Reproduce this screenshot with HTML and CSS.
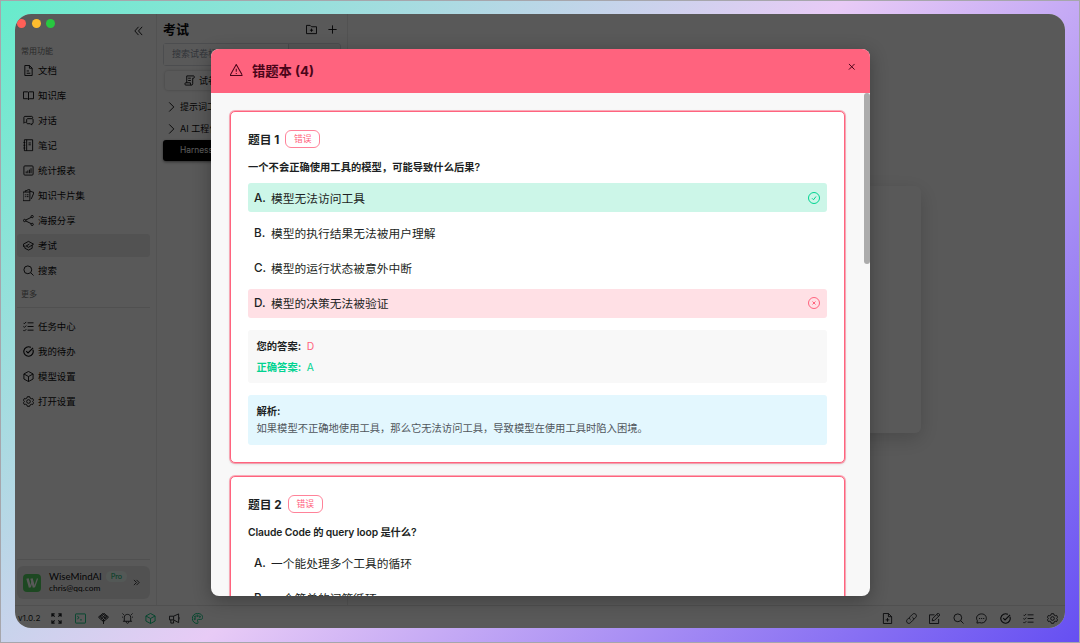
FILE: index.html
```html
<!DOCTYPE html>
<html lang="zh-CN">
<head>
  <meta charset="UTF-8" />
  <meta name="viewport" content="width=device-width, initial-scale=1.0"/>
  <title>WiseMindAI - 错题本</title>
  <link rel="stylesheet" href="styles.css">
</head>
<body>
  <svg class="sprite" xmlns="http://www.w3.org/2000/svg">
    <symbol id="i-doc" viewBox="0 0 24 24"><path d="M14 1H4v22h16V7zM14 1v6h6M8 13h5M8 18h8"/></symbol>
    <symbol id="i-book" viewBox="0 0 24 24"><path d="M12 5v16M12 5c-1-1-2-1-3-1H1v15h8c1 0 2 0 3 2 1-2 2-2 3-2h8V4h-8c-1 0-2 0-3 1z"/></symbol>
    <symbol id="i-chat" viewBox="0 0 24 24"><path d="M6 16H4l-2 2V5c0-1 1-2 2-2h15c1 0 2 1 2 2v2M10 8h10c1 0 2 1 2 2v7c0 1-1 2-2 2h-1v3l-3-3h-6c-1 0-2-1-2-2v-7c0-1 1-2 2-2z"/></symbol>
    <symbol id="i-note" viewBox="0 0 24 24"><path d="M3 0h18v24H3zM8 0v24M12 7h5M12 11h5M1 6h4M1 12h4M1 18h4"/></symbol>
    <symbol id="i-chart" viewBox="0 0 24 24"><rect x="2" y="2" width="20" height="20" rx="2"/><path d="M7 18v-4M10.500 18v-6M14 18v-8M17.500 18V7"/></symbol>
    <symbol id="i-cards" viewBox="0 0 24 24"><path d="M0 5h15v19H0zM5 5V2h4l1-2h5v5M15 3l9 3-6 14M4 11h2M8 11h4M4 15h2M8 15h4"/></symbol>
    <symbol id="i-share" viewBox="0 0 24 24"><circle cx="3.500" cy="12" r="2.500"/><circle cx="20" cy="3.500" r="2.500"/><circle cx="20" cy="20.500" r="2.500"/><path d="M6 11l12-6M6 13l12 6"/></symbol>
    <symbol id="i-exam" viewBox="0 0 24 24"><path d="M1 9l11-6 11 6-11 7-5-3 7-4M4 12v6l8 4 8-4v-7M1 9v6"/></symbol>
    <symbol id="i-search" viewBox="0 0 24 24"><circle cx="10.500" cy="10.500" r="8.500"/><path d="M17 17l6 6"/></symbol>
    <symbol id="i-tasks" viewBox="0 0 24 24"><path d="M10 4h13M10 12h13M10 20h13M1 4l2 2 4-4M1 12l2 2 4-4M1 20l2 2 4-4"/></symbol>
    <symbol id="i-todo" viewBox="0 0 24 24"><path stroke-width="2.500" d="M21.500 8A10.300 10.300 0 1 1 17 3M7 11l4 4L22 4"/></symbol>
    <symbol id="i-cube" viewBox="0 0 24 24"><path d="M12 1l10 5.500v11L12 23 2 17.500v-11zM2 6.500L12 12l10-5.500M12 12v11"/></symbol>
    <symbol id="i-gear" viewBox="0 0 24 24"><path d="M9.500 1.500h5l1 3 2.500 1.500 3-.7 2 4L21 12l2 2.700-2 4-3-.7-2.500 1.500-1 3h-5l-1-3L6 18l-3 .7-2-4L3 12 1 9.300l2-4L6 6l2.500-1.500z"/><circle cx="12" cy="12" r="4"/></symbol>
    <symbol id="i-collapse" viewBox="0 0 24 24"><path d="M12 4l-8 9 8 9M20 4l-8 9 8 9"/></symbol>
    <symbol id="i-expand" viewBox="0 0 24 24"><path d="M3 3l9 9-9 9M12 3l9 9-9 9"/></symbol>
    <symbol id="i-folder" viewBox="0 0 24 24"><path d="M1 3h8l3 3h11v15H1zM12 10v7M8.500 13.500h7"/></symbol>
    <symbol id="i-plus" viewBox="0 0 24 24"><path d="M12 3v18M3 12h18"/></symbol>
    <symbol id="i-scroll" viewBox="0 0 24 24"><path d="M6 17V2h15c2 0 2 5 0 5h-2v12c0 2-1 3-3 3H4c-3 0-3-5 0-5h10v3c0 1 1 2 2 2M9 7h6M9 12h6"/></symbol>
    <symbol id="i-chevron" viewBox="0 0 24 24"><path d="M7 3l10 10L7 23"/></symbol>
    <symbol id="i-warn" viewBox="0 0 24 24"><path d="M12 1L0 22h24zM12 9v6M12 17.500v1.500"/></symbol>
    <symbol id="i-x" viewBox="0 0 24 24"><path d="M3 3l18 18M21 3L3 21"/></symbol>
    <symbol id="i-right" viewBox="0 0 24 24"><circle cx="12" cy="12" r="11"/><path d="M8 12.500l3 3 5-6.500"/></symbol>
    <symbol id="i-wrong" viewBox="0 0 24 24"><circle cx="12" cy="12" r="11"/><path d="M9 9l6 6M15 9l-6 6"/></symbol>
    <symbol id="i-full" viewBox="0 0 24 24"><path stroke-width="2.600" d="M2 8V2h6M16 2h6v6M22 16v6h-6M8 22H2v-6M3 3l5 5M21 3l-5 5M21 21l-5-5M3 21l5-5"/></symbol>
    <symbol id="i-term" viewBox="0 0 24 24"><rect x="1" y="2" width="22" height="20" rx="1"/><path d="M5 7l4 3-4 3M11 15h4"/></symbol>
    <symbol id="i-finger" viewBox="0 0 24 24"><path d="M12 0l11 9-11 10L1 9zM7 4l11 9M4 7l11 10M10 1l11 10M17 4L6 14M20 7L9 17M14 1L3 11M12 15v9"/></symbol>
    <symbol id="i-bell" viewBox="0 0 24 24"><path d="M5 18V9c0-8 14-8 14 0v9M2 18h20M9 18c0 6 6 6 6 0M1 1l3 3M23 1l-3 3M0 9h2M22 9h2"/></symbol>
    <symbol id="i-horn" viewBox="0 0 24 24"><path d="M1 7h9l11-5v19l-11-6H1zM4 15v7h6v-6M10 7v8M24 9v5"/></symbol>
    <symbol id="i-palette" viewBox="0 0 24 24"><path d="M12 23C-3 23-3 1 12 1c13 0 14 13 7 13h-5c-4 0-1 4-1 7 0 1-.5 2-1 2z"/><circle cx="7" cy="8" r="1.500"/><circle cx="12" cy="6" r="1.500"/><circle cx="17" cy="8" r="1.500"/><circle cx="6" cy="13" r="1.500"/></symbol>
    <symbol id="i-newdoc" viewBox="0 0 24 24"><path d="M14 1H3v22h18V8zM14 1v7h7M12 11v8M8 15h8"/></symbol>
    <symbol id="i-link" viewBox="0 0 24 24"><path d="M10 15c-3-2-3-5-1-7l5-5c5-5 12 2 7 7l-4 4M14 9c3 2 3 5 1 7l-5 5c-5 5-12-2-7-7l4-4"/></symbol>
    <symbol id="i-edit" viewBox="0 0 24 24"><path d="M12 4H1v19h20V13M7 17l1-5L20 0l4 4-12 12zM17 3l4 4"/></symbol>
    <symbol id="i-msg" viewBox="0 0 24 24"><path d="M2 22l1-5C-2 9 4 2 12 2s12 6 10 13c-2 6-9 8-14 6zM6.500 12H9M11 12h2.500M15.500 12H18"/></symbol>
  </svg>

  <div class="window">
    <div class="workspace">
      <aside class="sidebar">
        <div class="sidebar-top"><svg class="icon"><use href="#i-collapse"/></svg></div>
        <div class="group-label">常用功能</div>
        <nav class="nav">
          <a class="nav-item"><svg class="icon"><use href="#i-doc"/></svg>文档</a>
          <a class="nav-item"><svg class="icon"><use href="#i-book"/></svg>知识库</a>
          <a class="nav-item"><svg class="icon"><use href="#i-chat"/></svg>对话</a>
          <a class="nav-item"><svg class="icon tall"><use href="#i-note"/></svg>笔记</a>
          <a class="nav-item"><svg class="icon"><use href="#i-chart"/></svg>统计报表</a>
          <a class="nav-item"><svg class="icon tall"><use href="#i-cards"/></svg>知识卡片集</a>
          <a class="nav-item"><svg class="icon"><use href="#i-share"/></svg>海报分享</a>
          <a class="nav-item active"><svg class="icon"><use href="#i-exam"/></svg>考试</a>
          <a class="nav-item"><svg class="icon"><use href="#i-search"/></svg>搜索</a>
        </nav>
        <div class="group-label more">更多</div>
        <nav class="nav nav-more">
          <a class="nav-item"><svg class="icon"><use href="#i-tasks"/></svg>任务中心</a>
          <a class="nav-item"><svg class="icon"><use href="#i-todo"/></svg>我的待办</a>
          <a class="nav-item"><svg class="icon"><use href="#i-cube"/></svg>模型设置</a>
          <a class="nav-item"><svg class="icon"><use href="#i-gear"/></svg>打开设置</a>
        </nav>
        <div class="account">
          <div class="user">
            <svg class="logo" viewBox="0 0 18 18"><path d="M4.500 4.500l2.500 9M8.500 4.500l2.500 9"/><path class="thin" d="M7.500 12.500L9 8M14.500 4.500l-3 8.500"/></svg>
            <div class="user-info">
              <div class="user-name">WiseMindAI <span class="pro">Pro</span></div>
              <div class="user-mail">chris@qq.com</div>
            </div>
            <svg class="icon"><use href="#i-expand"/></svg>
          </div>
        </div>
      </aside>

      <section class="papers">
        <div class="papers-head">
          <h2>考试</h2>
          <svg class="icon"><use href="#i-folder"/></svg>
          <svg class="icon"><use href="#i-plus"/></svg>
        </div>
        <div class="search"><span>搜索试卷标题</span></div>
        <div class="papers-btn"><svg class="icon"><use href="#i-scroll"/></svg>试卷</div>
        <div class="tree-item"><svg class="icon"><use href="#i-chevron"/></svg>提示词工程</div>
        <div class="tree-item"><svg class="icon"><use href="#i-chevron"/></svg>AI 工程化</div>
        <div class="tree-leaf">Harness</div>
      </section>

      <main class="content"><div class="panel"></div></main>
    </div>

    <footer class="statusbar">
      <span class="version">v1.0.2</span>
      <svg class="icon"><use href="#i-full"/></svg>
      <svg class="icon green"><use href="#i-term"/></svg>
      <svg class="icon"><use href="#i-finger"/></svg>
      <svg class="icon"><use href="#i-bell"/></svg>
      <svg class="icon green"><use href="#i-cube"/></svg>
      <svg class="icon"><use href="#i-horn"/></svg>
      <svg class="icon green"><use href="#i-palette"/></svg>
      <span class="spacer"></span>
      <svg class="icon"><use href="#i-newdoc"/></svg>
      <svg class="icon"><use href="#i-link"/></svg>
      <svg class="icon"><use href="#i-edit"/></svg>
      <svg class="icon"><use href="#i-search"/></svg>
      <svg class="icon"><use href="#i-msg"/></svg>
      <svg class="icon"><use href="#i-todo"/></svg>
      <svg class="icon"><use href="#i-tasks"/></svg>
      <svg class="icon"><use href="#i-gear"/></svg>
    </footer>

    <div class="mask"></div>
    <div class="lights"><i class="red"></i><i class="yellow"></i><i class="lime"></i></div>

    <div class="modal">
      <header class="modal-head">
        <svg class="icon warn"><use href="#i-warn"/></svg>
        <h1>错题本 (4)</h1>
        <svg class="icon close"><use href="#i-x"/></svg>
      </header>
      <div class="modal-body">
        <article class="card">
          <div class="card-head"><h3>题目 1</h3><span class="tag">错误</span></div>
          <p class="question">一个不会正确使用工具的模型，可能导致什么后果?</p>
          <ul class="options">
            <li class="right"><b>A.</b>模型无法访问工具<svg class="icon"><use href="#i-right"/></svg></li>
            <li><b>B.</b>模型的执行结果无法被用户理解</li>
            <li><b>C.</b>模型的运行状态被意外中断</li>
            <li class="wrong"><b>D.</b>模型的决策无法被验证<svg class="icon"><use href="#i-wrong"/></svg></li>
          </ul>
          <div class="answers">
            <div><strong>您的答案:</strong><span class="mine">D</span></div>
            <div class="correct"><strong>正确答案:</strong><span>A</span></div>
          </div>
          <div class="explain">
            <strong>解析:</strong>
            <p>如果模型不正确地使用工具，那么它无法访问工具，导致模型在使用工具时陷入困境。</p>
          </div>
        </article>
        <article class="card">
          <div class="card-head"><h3>题目 2</h3><span class="tag">错误</span></div>
          <p class="question latin">Claude Code 的 query loop 是什么?</p>
          <ul class="options">
            <li><b>A.</b>一个能处理多个工具的循环</li>
            <li><b>B.</b>一个简单的问答循环</li>
          </ul>
        </article>
        <div class="scroll-thumb"></div>
      </div>
    </div>
  </div>
</body>
</html>
```

FILE: styles.css
```css
* {
  box-sizing: border-box;
}

body {
  margin: 0;
  height: 643px;
  padding: 13px 14px 14px;
  border: 1px solid #a6a6ac;
  overflow: hidden;
  font-family: Inter, "Noto Sans CJK SC", sans-serif;
  color: #1c1f23;
  background: linear-gradient(135deg, #66eccb, #e8cbf6 49%, #654ff2);
}

h1, h2, h3, p, ul {
  margin: 0;
  padding: 0;
}

.sprite {
  display: none;
}

.icon {
  width: 11px;
  height: 11px;
  flex: none;
  fill: none;
  stroke: currentColor;
  stroke-width: 2;
  overflow: visible;
}

.window {
  position: relative;
  height: 614px;
  display: flex;
  flex-direction: column;
  border-radius: 16px;
  overflow: hidden;
  background: #fff;
}

.workspace {
  flex: 1;
  display: flex;
  min-height: 0;
  color: #0a0a0c;
}

/* sidebar */
.sidebar {
  width: 142px;
  display: flex;
  flex-direction: column;
  border-right: 1px solid #ebebeb;
  padding: 0 6px 0 2px;
}

.sidebar-top {
  height: 29px;
  padding: 11px 6px 0 0;
  text-align: right;
  line-height: 0;
}

.group-label {
  height: 16px;
  padding-left: 4px;
  font-size: 8px;
  line-height: 16px;
  color: #777;
}

.nav-item {
  display: flex;
  align-items: center;
  gap: 4.5px;
  height: 23px;
  margin-bottom: 2px;
  padding: 0 0 1px 5.5px;
  border-radius: 3px;
  font-size: 9.4px;
}

.nav-item .icon {
  margin-top: 1px;
}

.nav-item.active {
  background: #ebebeb;
}

.nav-item .tall {
  height: 12.5px;
}

.more {
  margin-top: 2px;
}

.nav-more {
  margin-top: 5px;
  padding-top: 7px;
  border-top: 1px solid #e4e4e4;
}

.account {
  margin-top: auto;
  padding: 6px 0;
  border-top: 1px solid #e4e4e4;
}

.user {
  display: flex;
  align-items: center;
  height: 33px;
  padding: 0 10px 0 6px;
  border-radius: 6px;
  background: #e9e9e9;
  font-family: Lato, sans-serif;
}

.user .icon {
  width: 7px;
  height: 7px;
  margin-left: auto;
  stroke-width: 2.6;
}

.logo {
  width: 18px;
  height: 18px;
  border-radius: 4px;
  background: #55cf61;
  fill: none;
  stroke: #fff;
  stroke-width: 2.4;
}

.logo .thin {
  stroke-width: 1.2;
}

.user-info {
  margin-left: 8px;
}

.user-name {
  display: flex;
  align-items: center;
  gap: 4px;
  font-size: 9.7px;
  line-height: 12px;
}

.pro {
  height: 11px;
  padding: 0 5px;
  border-radius: 6px;
  font-size: 7.5px;
  line-height: 11px;
  color: #06b470;
  background: #eefcf5;
}

.user-mail {
  font-size: 8.4px;
  line-height: 13px;
}

/* exam list */
.papers {
  width: 191px;
  padding: 0 6px;
  border-right: 1px solid #ebebeb;
  font-size: 9px;
}

.papers-head {
  display: flex;
  align-items: center;
  gap: 10px;
  height: 29px;
  padding: 1px 3px 0 0;
}

.papers-head h2 {
  flex: 1;
  margin-top: -2px;
  font-size: 13px;
}

.search {
  display: flex;
  height: 23px;
  border: 1px solid #d9dce2;
  border-radius: 3px;
  line-height: 20px;
  color: #8d94a3;
  background: #f6f6f6;
}

.search span {
  width: 125px;
  padding-left: 8px;
  border-right: 1px solid #d0d3d9;
  background: #fff;
}

.papers-btn {
  display: flex;
  align-items: center;
  gap: 4px;
  height: 19px;
  margin: 5px 2px 5px;
  padding-left: 19px;
  border-radius: 3px;
  box-shadow: 0 0 3px rgba(0, 0, 0, 0.25);
}

.tree-item {
  display: flex;
  align-items: center;
  gap: 3px;
  height: 22px;
  padding-left: 3px;
}

.tree-leaf {
  height: 21px;
  margin-top: 1px;
  padding-left: 17px;
  border-radius: 3px;
  font-size: 8.4px;
  line-height: 20px;
  color: #fff;
  background: #000;
  box-shadow: 0 1px 3px rgba(0, 0, 0, 0.5);
}

.content {
  flex: 1;
  display: flex;
  align-items: center;
  justify-content: center;
}

.panel {
  width: 429px;
  height: 247px;
  margin-top: -1px;
  border-radius: 6px;
  background: #fff;
  box-shadow: 0 6px 20px rgba(0, 0, 0, 0.18);
}

/* status bar */
.statusbar {
  display: flex;
  align-items: center;
  gap: 12.5px;
  height: 23px;
  padding: 2px 7.5px 0 3px;
  border-top: 1px solid #e4e4e4;
}

.version {
  width: 21px;
  margin-right: -0.5px;
  font-size: 8.2px;
  white-space: nowrap;
}

.spacer {
  flex: 1;
}

.green {
  color: #00c47c;
}

.mask {
  position: absolute;
  inset: 0;
  background: rgba(0, 0, 0, 0.65);
}

.lights {
  position: absolute;
  left: 2px;
  top: 5px;
  display: flex;
  gap: 5.5px;
}

.lights i {
  width: 9px;
  height: 9px;
  border-radius: 50%;
}

.red { background: #ff5f57; }
.yellow { background: #febc2e; }
.lime { background: #28c840; }

/* wrong answers dialog */
.modal {
  position: absolute;
  left: 196px;
  top: 35px;
  width: 659px;
  height: 546.5px;
  display: flex;
  flex-direction: column;
  border-radius: 8px;
  overflow: hidden;
  background: #f8f8f8;
  box-shadow: 0 4px 18px rgba(0, 0, 0, 0.3);
}

.modal-head {
  display: flex;
  align-items: center;
  height: 44px;
  padding: 0 14.5px 0 19px;
  color: #4a0519;
  background: #ff637e;
}

.modal-head h1 {
  flex: 1;
  margin: -2px 0 0 9.5px;
  font-size: 13.3px;
}

.warn {
  width: 12.5px;
  height: 12.5px;
  margin-top: -1px;
}

.close {
  width: 7.5px;
  height: 7.5px;
  margin-top: -9px;
  stroke-width: 3.2;
}

.modal-body {
  position: relative;
  flex: 1;
  min-height: 0;
  padding: 18px 24px 0 18px;
  overflow: hidden;
}

.scroll-thumb {
  position: absolute;
  top: 0;
  right: 0;
  width: 6px;
  height: 171px;
  border-radius: 3px;
  background: #acacac;
}

.card {
  height: 352px;
  margin: 0 1px 13px;
  padding: 18px 17px;
  border: 1px solid #ff637e;
  border-radius: 5px;
  background: #fff;
  box-shadow: 0 0 0 1px rgba(255, 99, 126, 0.5), 0 1px 3px rgba(0, 0, 0, 0.15);
}

.card-head {
  display: flex;
  align-items: center;
  gap: 6px;
  height: 17px;
}

.card-head h3 {
  margin-top: -1px;
  font-size: 11.75px;
}

.tag {
  width: 35px;
  height: 18px;
  border: 1px solid #ff8299;
  border-radius: 6px;
  font-size: 8.8px;
  line-height: 16px;
  text-align: center;
  color: #ff637e;
}

.question {
  margin: 11.5px 0 8.5px;
  font-size: 10.3px;
  font-weight: 600;
  line-height: 16px;
}

.latin {
  letter-spacing: -0.12px;
}

.options {
  list-style: none;
}

.options li {
  display: flex;
  align-items: center;
  height: 29px;
  margin-bottom: 6.3px;
  padding: 0 7px 1px 6px;
  border-radius: 3px;
  font-size: 11.75px;
}

.options b {
  width: 17px;
  padding-top: 1px;
  font-weight: 500;
}

.options .icon {
  width: 12px;
  height: 12px;
  margin: 1px 0 0 auto;
}

.options .right {
  background: #ccf6e8;
}

.options .wrong {
  background: #ffe0e5;
}

.right .icon {
  color: #00d390;
}

.wrong .icon {
  color: #ff637e;
}

.answers {
  height: 53px;
  margin-top: 12px;
  padding: 6px 8.5px;
  border-radius: 3px;
  font-size: 10.3px;
  line-height: 20.8px;
  background: #f8f8f8;
}

.answers span {
  margin-left: 5.5px;
}

.mine {
  color: #ff637e;
}

.correct {
  color: #00d390;
}

.explain {
  height: 50px;
  margin-top: 12px;
  padding: 8px 8.5px;
  border-radius: 3px;
  font-size: 10.3px;
  line-height: 17.5px;
  background: #e3f7fe;
}

.explain strong {
  display: block;
}

.explain p {
  color: #50565c;
}
```
